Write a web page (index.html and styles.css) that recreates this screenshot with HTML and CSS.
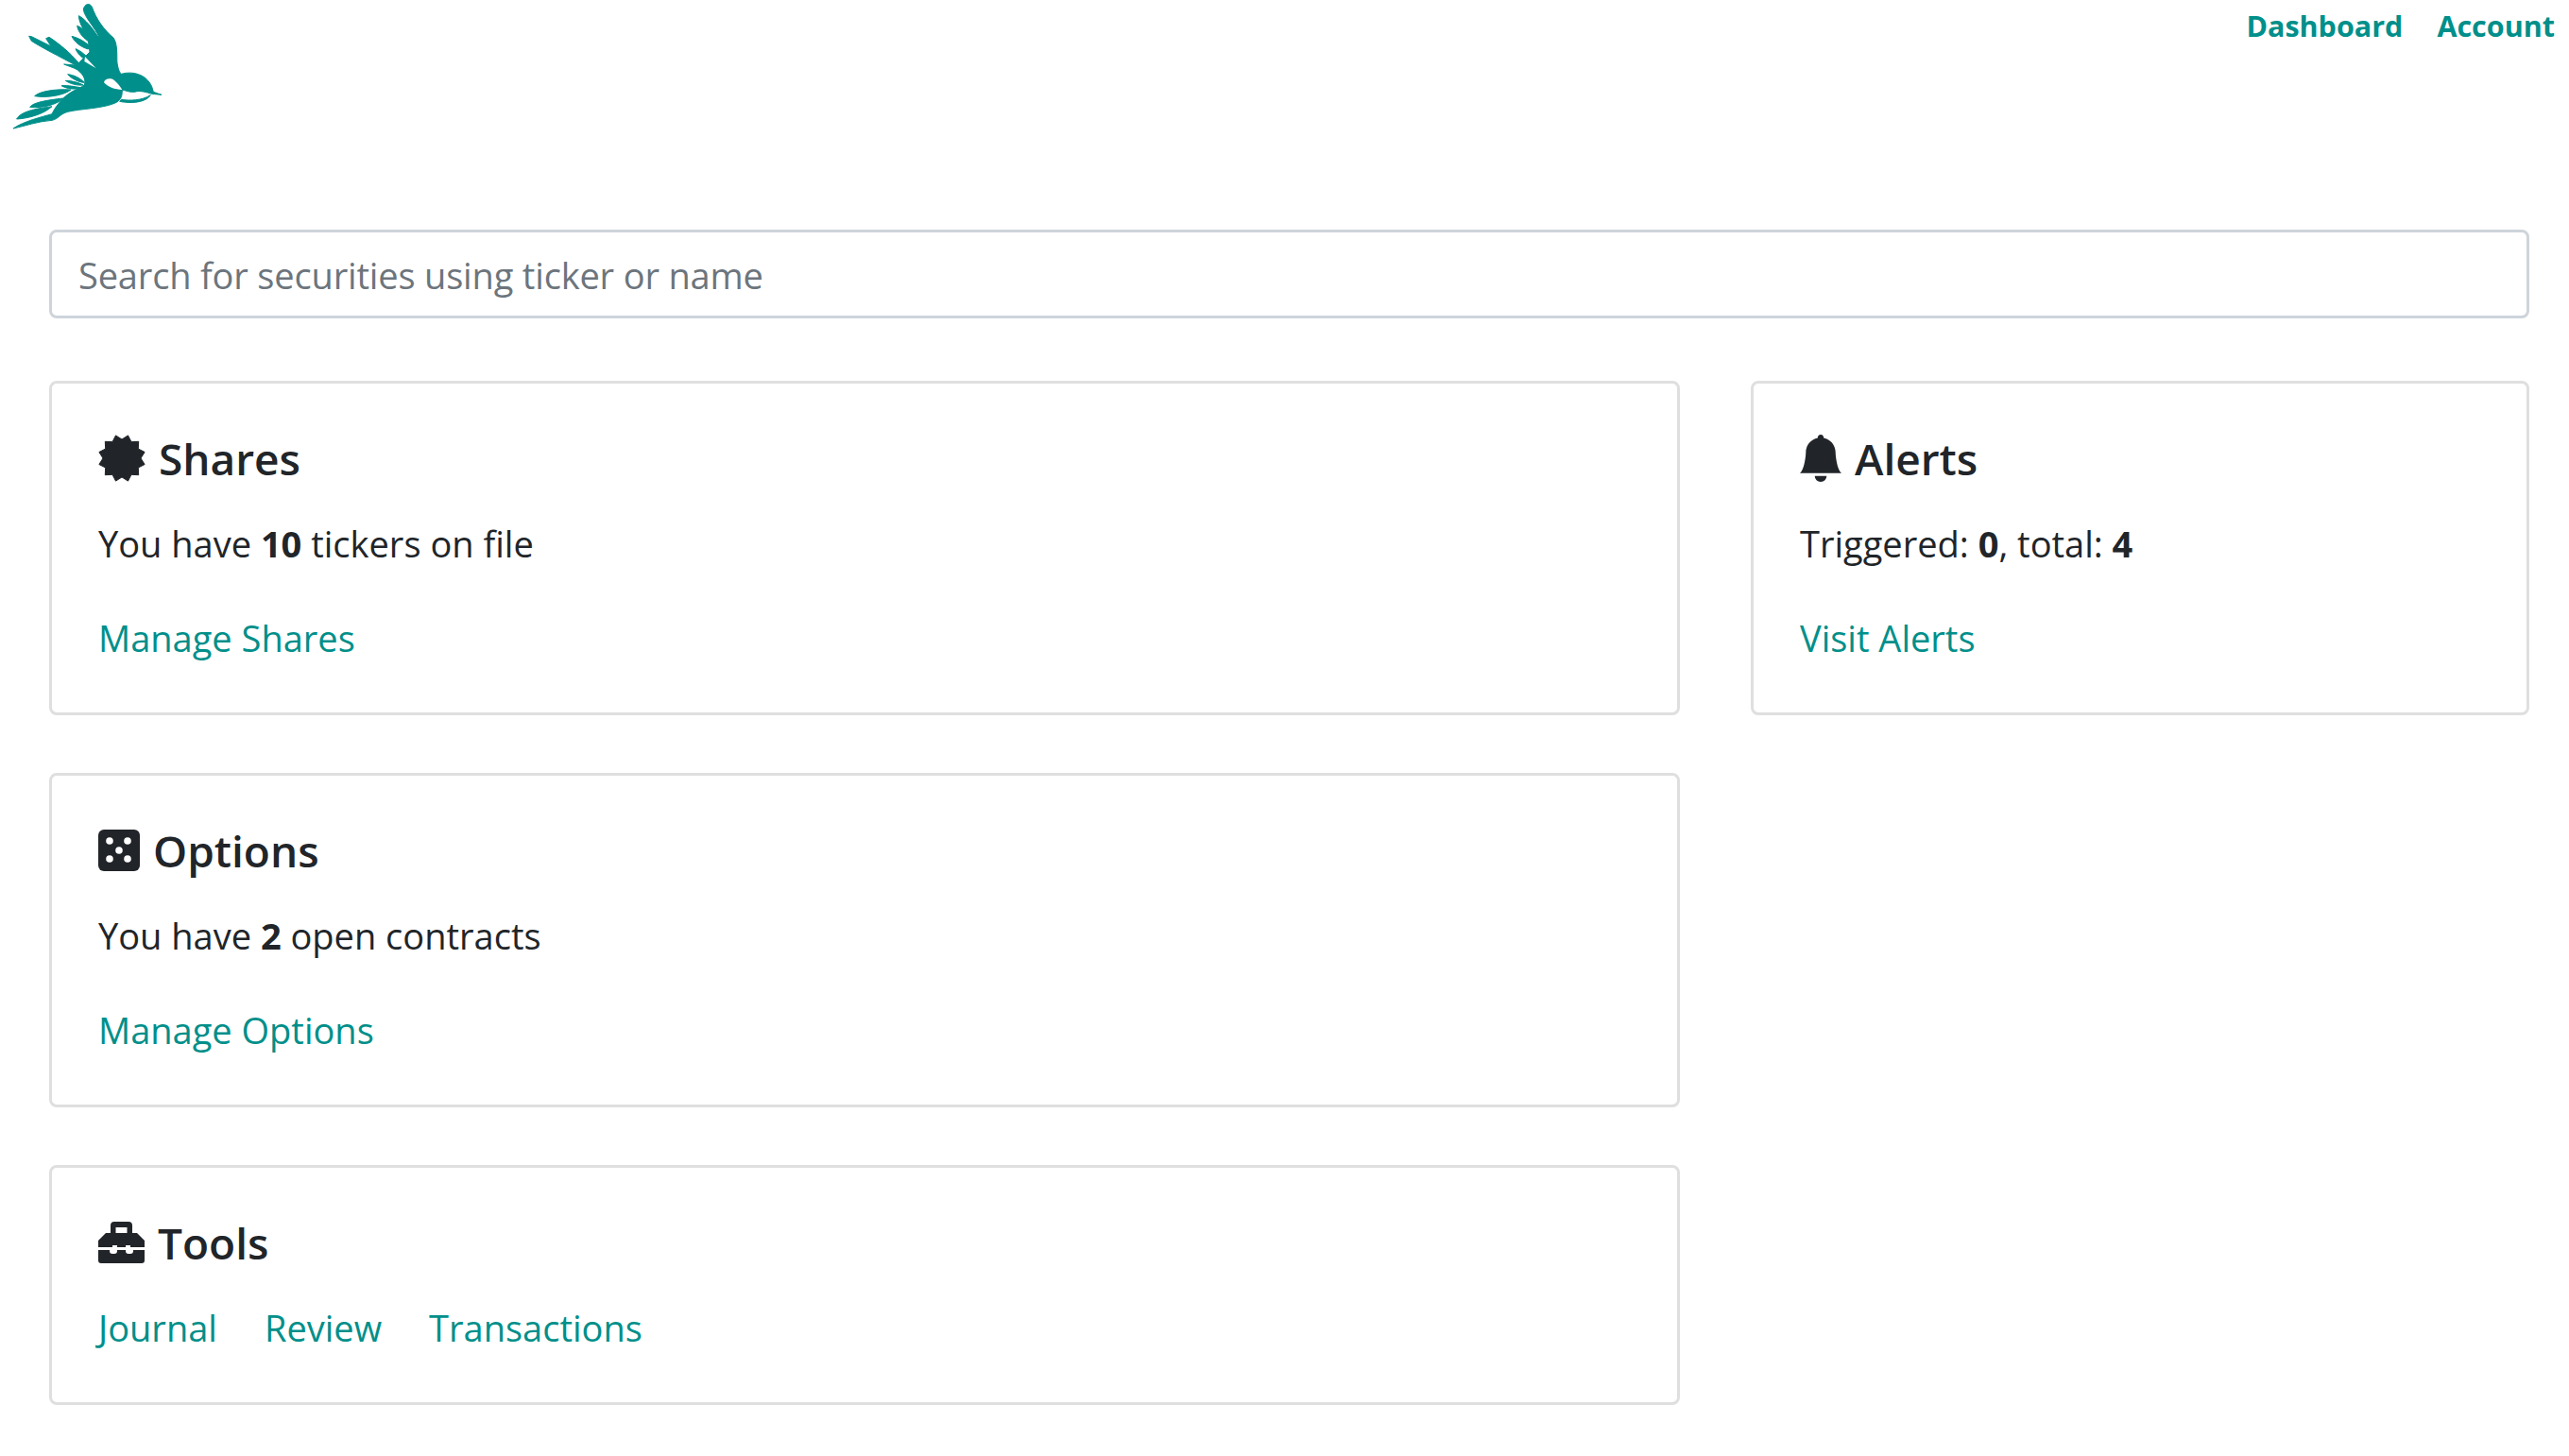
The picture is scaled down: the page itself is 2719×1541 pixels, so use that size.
FILE: index.html
```html
<!DOCTYPE html>
<html lang="en">
<head>
    <meta charset="UTF-8">
    <meta name="viewport" content="width=device-width, initial-scale=1.0">
    <title>Dashboard</title>
    <link rel="stylesheet" href="styles.css">
</head>
<body>
    <!-- Logo and nav -->
    <header class="topbar">
        <svg class="logo" viewBox="0 0 600 450" aria-label="Logo">
            <g fill="#008f8a" stroke="#008f8a" stroke-width="3" stroke-linejoin="round">
                <!-- tail -->
                <path d="M92 115 L100 116 L162 147 L146 122 L156 118 C190 140 225 170 245 195 L300 240 L240 218 L203 204 L240 207 C190 180 130 150 100 130 Z"/>
                <!-- upper wing feathers -->
                <path d="M250 50 C268 58 295 90 312 118 L292 124 C270 105 252 78 250 50 Z"/>
                <path d="M245 82 C262 88 282 108 292 126 L285 134 C265 122 248 102 245 82 Z"/>
                <path d="M228 115 C248 120 270 132 284 146 L280 156 C258 150 236 134 228 115 Z"/>
                <path d="M240 155 C258 162 276 178 290 197 C268 190 248 175 240 155 Z"/>
                <!-- lower wing feathers -->
                <path d="M215 236 C235 238 255 248 268 262 C250 262 225 248 215 236 Z"/>
                <path d="M208 256 C228 256 250 262 264 270 C245 272 222 266 208 256 Z"/>
                <path d="M195 272 C215 270 240 276 256 278 C238 286 212 282 195 272 Z"/>
                <path d="M110 305 C125 290 175 282 225 285 C205 302 150 312 110 305 Z"/>
                <path d="M95 340 C105 325 150 318 200 312 C180 334 130 344 95 340 Z"/>
                <path d="M53 378 C65 355 110 345 165 338 C140 362 90 376 53 378 Z"/>
                <!-- body and main wing -->
                <path d="M42 408 C75 385 130 372 165 362 C175 340 195 315 215 300 C235 285 255 280 268 270 C275 250 260 230 240 218 L245 205 L285 165 L280 130 L300 118 L315 118 C300 85 268 55 265 30 C268 12 285 8 292 22 C305 60 330 95 360 120 C375 140 370 185 372 200 C375 220 380 230 385 235 C420 225 465 235 482 275 L487 292 L513 301 L482 298 C465 292 445 288 435 290 C420 295 405 290 388 285 C388 305 385 315 370 325 C330 345 255 345 215 355 C190 362 185 378 165 382 C120 385 80 400 42 408 Z"/>
                <path d="M385 316 C410 320 450 320 478 302 C465 325 415 330 380 322 Z"/>
            </g>
            <g fill="#fff">
                <path d="M330 262 C332 250 350 246 362 254 C372 262 380 272 388 285 C365 285 340 275 330 262 Z"/>
                <path d="M270 180 L305 217 L268 195 Z"/>
            </g>
        </svg>
        <nav class="main-nav">
            <a href="#">Dashboard</a>
            <a href="#">Account</a>
        </nav>
    </header>

    <input class="search" type="text" placeholder="Search for securities using ticker or name">

    <main class="cards">
        <div class="col-main">
            <section class="card">
                <h4>
                    <svg class="icon" width="50" height="50" viewBox="0 0 50 50"><polygon fill="#212529" stroke="#212529" stroke-linejoin="round" points="45,25 49.1,31.5 42.3,35 42.7,42.7 35,42.3 31.5,49.1 25,45 18.5,49.1 15,42.3 7.3,42.7 7.7,35 .9,31.5 5,25 .9,18.5 7.7,15 7.3,7.3 15,7.7 18.5,.9 25,5 31.5,.9 35,7.7 42.7,7.3 42.3,15 49.1,18.5"/></svg>
                    Shares
                </h4>
                <p>You have <b>10</b> tickers on file</p>
                <a href="#">Manage Shares</a>
            </section>
            <section class="card">
                <h4>
                    <svg class="icon" width="44" height="44" viewBox="0 0 44 44"><rect width="44" height="44" rx="6" fill="#212529"/><g fill="#fff"><circle cx="12" cy="12" r="3.8"/><circle cx="31" cy="12" r="3.8"/><circle cx="22" cy="22" r="3.8"/><circle cx="12" cy="31" r="3.8"/><circle cx="31" cy="31" r="3.8"/></g></svg>
                    Options
                </h4>
                <p>You have <b>2</b> open contracts</p>
                <a href="#">Manage Options</a>
            </section>
            <section class="card">
                <h4>
                    <svg class="icon" width="49" height="44" viewBox="0 0 49 44"><path fill="#212529" fill-rule="evenodd" d="M13 12V4q0-4 4-4h15q4 0 4 4v8h5l8 8v7H34v-2h-5v2H20v-2h-5v2H0v-7l8-8zM18.500 6v6h12V6zM0 30h12v1q0 3 3 3h2q3 0 3-3v-1h9v1q0 3 3 3h2q3 0 3-3v-1h12v11q0 3-3 3H3q-3 0-3-3z"/></svg>
                    Tools
                </h4>
                <div class="links">
                    <a href="#">Journal</a>
                    <a href="#">Review</a>
                    <a href="#">Transactions</a>
                </div>
            </section>
        </div>
        <div class="col-side">
            <section class="card">
                <h4>
                    <svg class="icon" width="44" height="50" viewBox="1 0 14 16" preserveAspectRatio="none"><path fill="#212529" d="M8 16a2 2 0 0 0 2-2H6a2 2 0 0 0 2 2zm.995-14.901a1 1 0 1 0-1.99 0A5.002 5.002 0 0 0 3 6c0 1.098-.5 6-2 7h14c-1.500-1-2-5.902-2-7 0-2.420-1.720-4.440-4.005-4.901z"/></svg>
                    Alerts
                </h4>
                <p>Triggered: <b>0</b>, total: <b>4</b></p>
                <a href="#">Visit Alerts</a>
            </section>
        </div>
    </main>
</body>
</html>
```

FILE: styles.css
```css
body {
    margin: 0;
    padding: 0 15px 0 0;
    font-family: "Open Sans", "Noto Sans", sans-serif;
    font-size: 38px;
    line-height: 1.5;
    color: #212529;
    background: #fff;
    height: 1541px;
    overflow: hidden;
}
a {
    color: #008f8a;
    text-decoration: none;
}
.topbar {
    display: flex;
    justify-content: space-between;
    align-items: flex-start;
    height: 243px;
}
.logo {
    width: 200px;
    height: 150px;
}
.main-nav {
    display: flex;
    gap: 36px;
    padding-top: 5px;
    font-size: 30.5px;
    font-weight: 700;
}
.search {
    display: block;
    box-sizing: border-box;
    width: 2625px;
    height: 94px;
    margin: 0 0 66px 52px;
    padding: 1px 28px 0;
    border: 3px solid #ced4da;
    border-radius: 8px;
    font: inherit;
    letter-spacing: -0.17px;
    color: #495057;
}
.search::placeholder {
    color: #6c757d;
    opacity: 1;
}
.cards {
    display: flex;
    gap: 75px;
    margin-left: 52px;
}
.col-main {
    width: 1726px;
    display: flex;
    flex-direction: column;
    gap: 61px;
}
.col-side {
    width: 824px;
}
.card {
    box-sizing: border-box;
    border: 3px solid #dfdfdf;
    border-radius: 8px;
    padding: 50px 49px;
}
.card h4 {
    display: flex;
    align-items: center;
    gap: 14px;
    margin: 0 0 33px;
    font-size: 46px;
    font-weight: 600;
    line-height: 58px;
}
.card p {
    margin: 0 0 43px;
}
.links {
    display: flex;
    gap: 50px;
}
```
